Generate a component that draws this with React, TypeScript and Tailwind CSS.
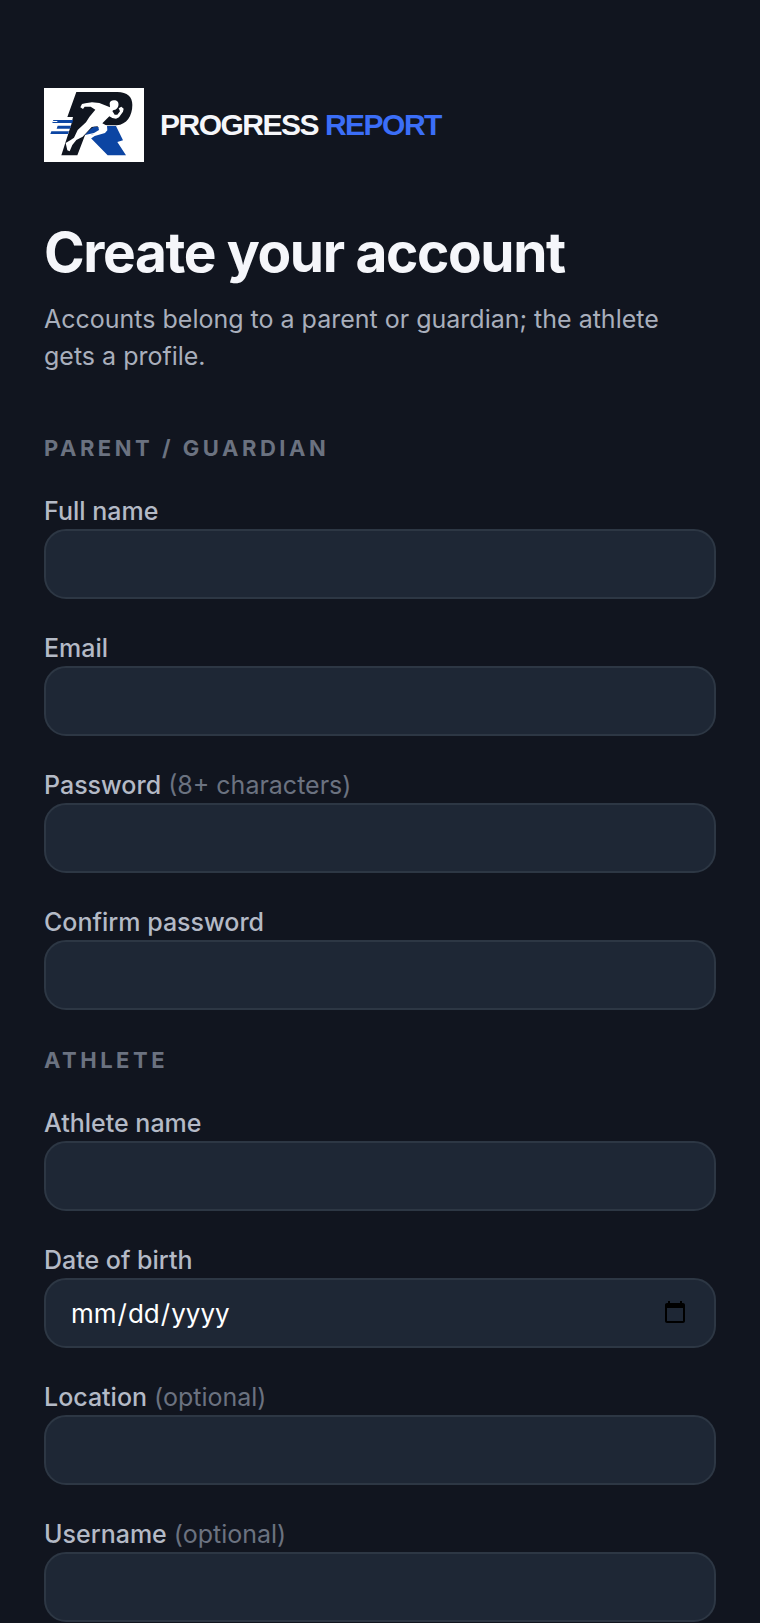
import type { InputHTMLAttributes, ReactNode } from "react";

function LogoMark() {
  return (
    <svg
      viewBox="24 25 300 222"
      className="h-[74px] w-[100px] shrink-0 bg-white"
      aria-hidden="true"
    >
      <path
        fill="#10151f"
        d="M121 37H244C274 37 289 52 289 76C289 108 272 135 242 137L205 137L165 150L147 167L124 227H76L106 134L111 112H94Z"
      />
      <path
        fill="#0c45a3"
        d="M211 139H240L261 182L244 187L270 227H215L165 176L166 165L200 159Z"
      />
      <path
        fill="#fff"
        d="M221 71C222 63 230 60 238 62C246 64 249 71 247 79C245 86 240 91 233 91L229 94L236 105L244 105L252 95L248 86L256 81L263 87L261 96L249 113L240 117L229 115L220 110L199 131L213 138L214 152L207 160L176 169L164 177L159 168L188 158L190 145L184 140L167 142L140 171L121 181L109 196L101 215L94 212L89 190L104 181L114 174L125 151L150 128L160 112L178 90L164 81L146 81L141 88L133 83L138 73L148 71L168 68L190 70L207 77L222 83Z"
      />
      <path fill="#0c45a3" d="M147 166L165 147L174 141L187 142L189 151L174 160Z" />
      <path fill="#0c45a3" d="M52 121H111L109 130H49ZM65 138H105L102 147H62ZM46 155H99L96 163H43Z" />
      <path fill="#fff" d="M50 124H64V127H49Z" />
    </svg>
  );
}

function SectionTitle({ children }: { children: ReactNode }) {
  return (
    <h2 className="text-[22px] leading-8 font-bold tracking-[0.16em] text-[#6b7280] uppercase">
      {children}
    </h2>
  );
}

type FieldProps = InputHTMLAttributes<HTMLInputElement> & {
  id: string;
  label: string;
  hint?: string;
};

function Field({ id, label, hint, ...input }: FieldProps) {
  return (
    <div className="flex flex-col">
      <label htmlFor={id} className="text-[25px] leading-9 font-medium text-[#b4bac6]">
        {label}
        {hint && <span className="font-normal text-[#6b7280]"> {hint}</span>}
      </label>
      <input
        id={id}
        name={id}
        className="h-[70px] w-full rounded-[22px] border-2 border-[#2d3744] bg-[#1e2735] px-6 text-[26px] text-white outline-none focus:border-[#3b6ef8]"
        {...input}
      />
    </div>
  );
}

export default function App() {
  return (
    <main className="min-h-screen bg-[#11151f] px-11 pt-[88px] font-['Inter',sans-serif]">
      <header className="flex items-center gap-4">
        <LogoMark />
        <p className="font-['Liberation_Sans',sans-serif] text-[30px] leading-8 font-bold tracking-tighter text-[#f5f6fa]">
          PROGRESS <span className="text-[#3b6ef8]">REPORT</span>
        </p>
      </header>

      <h1 className="mt-14 text-[55px] leading-[68px] font-bold tracking-tight text-[#f5f6fa]">
        Create your account
      </h1>
      <p className="mt-[15px] text-[25px] leading-[37px] text-[#a9afbc]">
        Accounts belong to a parent or guardian; the athlete gets a profile.
      </p>

      <form>
        <section className="mt-[57px]">
          <SectionTitle>Parent / Guardian</SectionTitle>
          <div className="mt-[29px] flex flex-col gap-[31px]">
            <Field id="full-name" label="Full name" type="text" />
            <Field id="email" label="Email" type="email" />
            <Field id="password" label="Password" hint="(8+ characters)" type="password" />
            <Field id="confirm-password" label="Confirm password" type="password" />
          </div>
        </section>

        <section className="mt-[34px]">
          <SectionTitle>Athlete</SectionTitle>
          <div className="mt-[29px] flex flex-col gap-[31px]">
            <Field id="athlete-name" label="Athlete name" type="text" />
            <Field id="date-of-birth" label="Date of birth" type="date" />
            <Field id="location" label="Location" hint="(optional)" type="text" />
            <Field id="username" label="Username" hint="(optional)" type="text" />
          </div>
        </section>
      </form>
    </main>
  );
}
